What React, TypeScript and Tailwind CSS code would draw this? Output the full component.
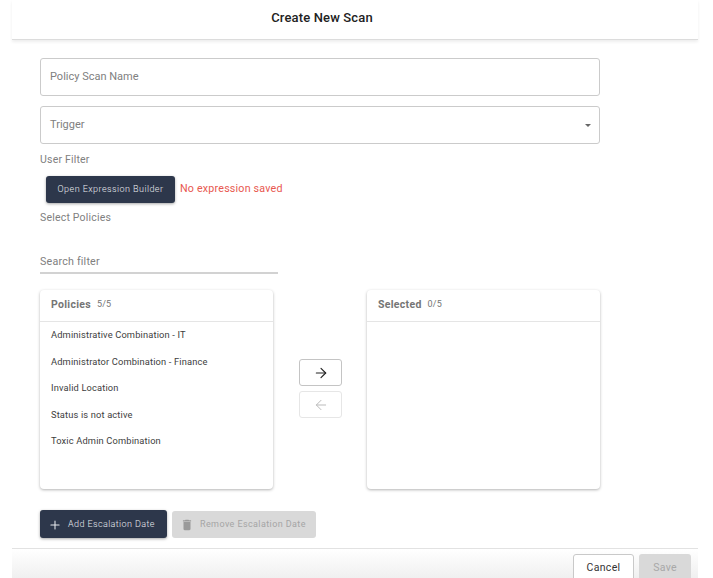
import { ArrowLeft, ArrowRight, Plus } from 'lucide-react'

const policies = [
  'Administrative Combination - IT',
  'Administrator Combination - Finance',
  'Invalid Location',
  'Status is not active',
  'Toxic Admin Combination',
]

function Panel({ title, count, items }: { title: string; count: string; items: string[] }) {
  return (
    <div className="h-[199px] w-[233px] rounded bg-white shadow-[0_1px_3px_rgba(0,0,0,0.3)]">
      <div className="flex h-[32px] items-center gap-[6px] border-b border-[#e5e5e5] px-[11px] pb-[1px] text-[#757575]">
        <span className="text-[10.5px] font-bold tracking-[0.3px]">{title}</span>
        <span className="text-[9px] tracking-[0.2px]">{count}</span>
      </div>
      <ul className="text-[9.3px] tracking-[0.15px] text-[#3d3d3d]">
        {items.map((item) => (
          <li key={item} className="flex h-[26.5px] items-center px-[11px]">
            {item}
          </li>
        ))}
      </ul>
    </div>
  )
}

export default function App() {
  return (
    <div className="flex h-[578px] w-[713px] flex-col overflow-hidden bg-white font-['Roboto',sans-serif]">
      <header className="ml-[12px] mr-[15px] flex h-[40px] shrink-0 items-center justify-center border-b border-[#dcdcdc] pb-[4px] pr-[66px] text-[13px] font-medium tracking-[0.15px] text-[#222] shadow-[0_2px_3px_rgba(0,0,0,0.07)]">
        Create New Scan
      </header>

      <main className="flex flex-1 flex-col pl-[40px] pt-[18px]">
        <div className="flex h-[38px] w-[560px] items-center rounded-[3px] border border-[#cbcbcb] px-[9px] pt-[1px] text-[11px] text-[#808080]">
          Policy Scan Name
        </div>
        <div className="mt-[10px] flex h-[38px] w-[560px] items-center justify-between rounded-[3px] border border-[#cbcbcb] px-[9px] pt-[1px] text-[11px] text-[#808080]">
          Trigger
          <span className="mr-[-1px] h-0 w-0 border-x-[3.5px] border-t-[3.5px] border-x-transparent border-t-[#666]" />
        </div>

        <div className="mt-[9px] text-[10.5px] leading-[14px] tracking-[0.2px] text-[#808080]">User Filter</div>

        <div className="mt-[9px] flex items-center">
          <button className="ml-[6px] h-[27px] w-[129px] rounded-[3px] bg-[#2d374b] text-[9px] font-light tracking-[0.45px] text-[#e8eaee] shadow-[0_1px_3px_rgba(0,0,0,0.35)]">
            Open Expression Builder
          </button>
          <span className="ml-[5px] text-[10.7px] tracking-[0.2px] text-[#e8584f]">No expression saved</span>
        </div>

        <div className="mt-[8px] text-[10.5px] leading-[14px] tracking-[0.2px] text-[#808080]">Select Policies</div>

        <div className="mt-[23px] h-[26px] w-[238px] border-b-2 border-[#d2d2d2] pt-[7px] text-[10.7px] leading-[14px] tracking-[0.2px] text-[#808080]">
          Search filter
        </div>

        <div className="mt-[16px] flex items-start">
          <Panel title="Policies" count="5/5" items={policies} />
          <div className="ml-[26px] mt-[69px] flex w-[43px] flex-col gap-[5px]">
            <button className="flex h-[27px] items-center justify-center rounded-[3px] border border-[#c4c4c4] text-[#222]">
              <ArrowRight size={16} strokeWidth={1.7} />
            </button>
            <button className="flex h-[27px] items-center justify-center rounded-[3px] border border-[#e6e6e6] text-[#bbb]">
              <ArrowLeft size={16} strokeWidth={1.5} />
            </button>
          </div>
          <div className="ml-[25px]">
            <Panel title="Selected" count="0/5" items={[]} />
          </div>
        </div>

        <div className="mt-[21px] flex items-center gap-[5px]">
          <button className="flex h-[28px] w-[127px] items-center gap-[6px] rounded-[3px] bg-[#2d374b] pl-[8px] pt-[1px] text-[9px] font-light tracking-[0.4px] text-[#e8eaee] shadow-[0_1px_3px_rgba(0,0,0,0.35)]">
            <Plus size={14} strokeWidth={1.8} />
            Add Escalation Date
          </button>
          <button className="flex h-[27px] w-[144px] items-center gap-[6px] rounded-[3px] bg-[#d9d9d9] pl-[8px] pt-[1px] text-[9px] tracking-[0.4px] text-[#a5a5a5]">
            <svg viewBox="0 0 24 24" className="h-[14px] w-[14px] fill-[#9a9a9a]">
              <path d="M6 19c0 1.1.9 2 2 2h8c1.1 0 2-.9 2-2V7H6v12zM19 4h-3.5l-1-1h-5l-1 1H5v2h14V4z" />
            </svg>
            Remove Escalation Date
          </button>
        </div>
      </main>

      <footer className="ml-[12px] mr-[15px] flex h-[30px] shrink-0 items-start justify-end gap-[5px] border-t border-[#e2e2e2] bg-gradient-to-b from-white to-[#f0f0f0] pr-[7px] pt-[5px]">
        <button className="h-[30px] w-[61px] rounded-[3px] border border-[#c9c9c9] bg-white pb-[2px] text-[10.5px] tracking-[0.3px] text-[#333]">
          Cancel
        </button>
        <button className="h-[30px] w-[52px] rounded-[3px] bg-[#d9d9d9] pb-[2px] text-[10.5px] tracking-[0.3px] text-[#a8a8a8]">
          Save
        </button>
      </footer>
    </div>
  )
}
